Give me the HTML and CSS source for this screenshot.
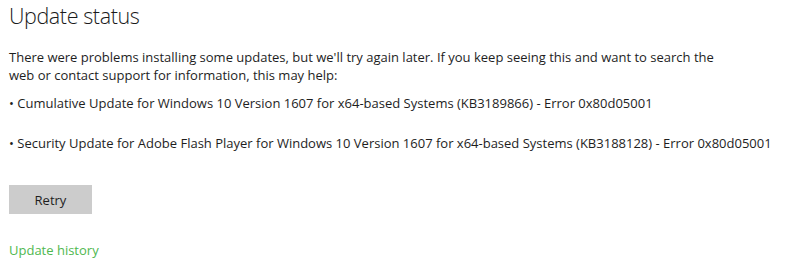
FILE: index.html
```html
<!DOCTYPE html>
<html>
<head>
<meta charset="utf-8">
<link rel="stylesheet" href="styles.css">
</head>
<body>
<main class="page">
  <h1 class="title">Update status</h1>
  <p class="intro">There were problems installing some updates, but we'll try again later. If you keep seeing this and want to search the web or contact support for information, this may help:</p>
  <ul class="errors">
    <li class="error">• Cumulative Update for Windows 10 Version 1607 for x64-based Systems (KB3189866) - Error 0x80d05001</li>
    <li class="error">• Security Update for Adobe Flash Player for Windows 10 Version 1607 for x64-based Systems (KB3188128) - Error 0x80d05001</li>
  </ul>
  <button class="retry" type="button">Retry</button>
  <a class="history" href="#">Update history</a>
</main>
</body>
</html>
```

FILE: styles.css
```css
html, body {
  margin: 0;
  padding: 0;
  background: #ffffff;
}
.page {
  display: flex;
  flex-direction: column;
  align-items: flex-start;
  padding-left: 9px;
  font-family: "Open Sans", "Noto Sans", sans-serif;
  color: #1e1e1e;
}
.title {
  margin: 0;
  font-size: 21.5px;
  font-weight: 300;
  letter-spacing: -0.4px;
  line-height: 32px;
  color: #1a1a1a;
}
.intro {
  margin: 16px 0 0;
  width: 715px;
  font-size: 13px;
  line-height: 18px;
}
.errors {
  list-style: none;
  margin: 10px 0 0;
  padding: 0;
  display: flex;
  flex-direction: column;
  gap: 22px;
  font-size: 13px;
  line-height: 18px;
}
.error {
  white-space: nowrap;
}
.retry {
  margin-top: 33px;
  width: 83px;
  height: 29px;
  border: none;
  background: #cccccc;
  font-family: inherit;
  font-size: 13px;
  color: #1e1e1e;
  padding: 0;
}
.history {
  margin-top: 27px;
  font-size: 13px;
  line-height: 18px;
  color: #4fb84f;
  text-decoration: none;
}
```
